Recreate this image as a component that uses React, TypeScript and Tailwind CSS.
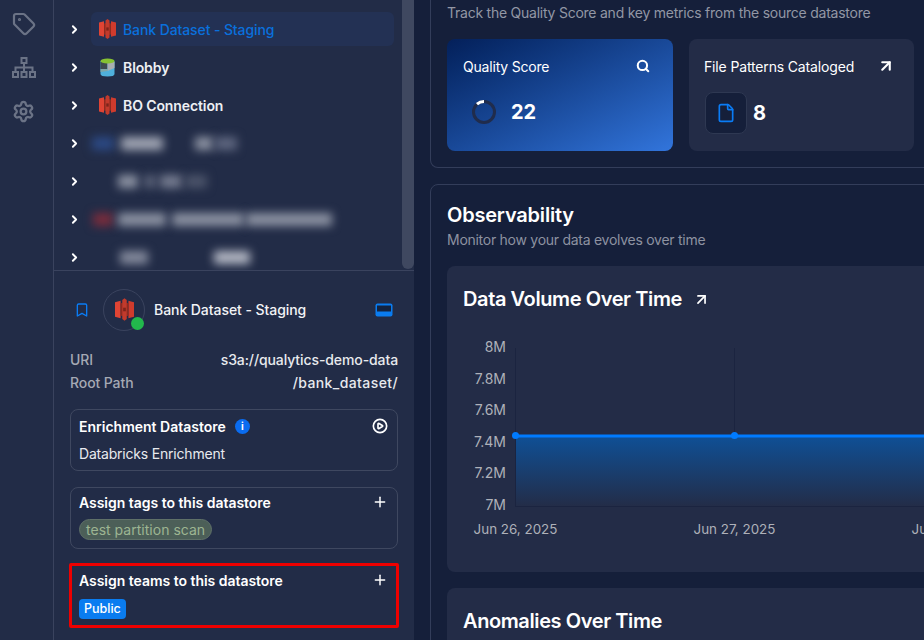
import { ArrowUpRight, Bookmark, ChevronRight, CirclePlay, File, Plus, Search, Settings, Tag } from "lucide-react";

// red bucket logo used for S3 datastores
function BucketIcon({ width = 17, height = 20 }: { width?: number; height?: number }) {
  return (
    <svg width={width} height={height} viewBox="0 0 17 20">
      <path d="M0 3.5 L5 2.2 V17.8 L0 16.5 Z" fill="#e04434" />
      <path d="M17 3.5 L12 2.2 V17.8 L17 16.5 Z" fill="#cf3b2d" />
      <path d="M5 4.5 L7 4 V16 L5 15.5 Z" fill="#8f2a1f" />
      <path d="M12 4.5 L10 4 V16 L12 15.5 Z" fill="#8f2a1f" />
      <path d="M6.5 1.5 L8.5 0 L10.5 1.5 V18.5 L8.5 20 L6.5 18.5 Z" fill="#c23a2c" />
      <rect x="7.3" y="8.4" width="2.4" height="3.2" fill="#7d241a" />
    </svg>
  );
}

function BlobbyIcon() {
  return (
    <svg width="15" height="19" viewBox="0 0 15 19">
      <path d="M0.5 3 H14.5 V16 Q14.5 18.5 7.5 18.5 Q0.5 18.5 0.5 16 Z" fill="#4fb0dc" />
      <rect x="0.5" y="4" width="7" height="7" fill="#3f4a50" />
      <path d="M7.5 4 H14.5 V10 L7.5 13 Z" fill="#a9adb0" />
      <path d="M0.5 11 H7.5 V13 L0.5 14 Z" fill="#7fa6a8" />
      <ellipse cx="7.5" cy="3" rx="7" ry="2.5" fill="#86c232" />
    </svg>
  );
}

function SitemapIcon() {
  return (
    <svg width="24" height="22" viewBox="0 0 24 22" fill="none" stroke="#6b7386" strokeWidth="2">
      <rect x="9.5" y="1" width="5" height="5" />
      <rect x="1" y="15" width="5" height="5" />
      <rect x="9.5" y="15" width="5" height="5" />
      <rect x="18" y="15" width="5" height="5" />
      <path d="M12 6 V15 M3.5 15 V10.5 H20.5 V15" />
    </svg>
  );
}

function PanelIcon() {
  return (
    <svg width="18" height="14" viewBox="0 0 18 14">
      <rect x="0.5" y="0.5" width="17" height="13" rx="2" fill="#0a7cf0" />
      <rect x="2" y="2.5" width="14" height="6" fill="#14233f" />
    </svg>
  );
}

function TreeRow({ label, icon, active }: { label: string; icon: React.ReactNode; active?: boolean }) {
  return (
    <div className="flex items-center h-[34px]">
      <ChevronRight size={13} strokeWidth={3.5} className="text-white ml-[14px] w-[13px] shrink-0" />
      <div className={`ml-[10px] flex items-center w-[303px] h-[34px] rounded-md pl-[6px] ${active ? "bg-[#233154]" : ""}`}>
        <div className="w-[20px] flex justify-center">{icon}</div>
        <span className={`ml-[6px] text-[14px] tracking-[-0.1px] ${active ? "text-[#0a70dc] font-medium" : "text-[#eef0f4] font-semibold"}`}>
          {label}
        </span>
      </div>
    </div>
  );
}

// redacted rows in the reference, just soft smudges
function BlurRow({ parts }: { parts: { w: number; ml: number; c: string }[] }) {
  return (
    <div className="flex items-center h-[34px]">
      <ChevronRight size={13} strokeWidth={3.5} className="text-white ml-[14px] w-[13px] shrink-0" />
      <div className="ml-[9px] flex items-center">
        {parts.map((p, i) => (
          <div key={i} className={`h-[13px] blur-[5px] ${p.c}`} style={{ width: p.w, marginLeft: p.ml }} />
        ))}
      </div>
    </div>
  );
}

function Chart() {
  const yLabels = [
    ["8M", 352],
    ["7.8M", 384],
    ["7.6M", 415],
    ["7.4M", 447],
    ["7.2M", 478],
    ["7M", 510],
  ] as const;
  const ox = 447;
  const oy = 266;
  return (
    <svg width="600" height="306" viewBox={`${ox} ${oy} 600 306`} className="block">
      <defs>
        <linearGradient id="area" x1="0" y1="0" x2="0" y2="1">
          <stop offset="0" stopColor="#0f5096" />
          <stop offset="1" stopColor="#232d48" />
        </linearGradient>
      </defs>
      <rect x="515" y="436" width="532" height="70" fill="url(#area)" />
      <path d="M515.5 348 V506 M734.5 348 V436 M515 506.5 H1047" stroke="#1b2440" strokeWidth="1" fill="none" />
      <path d="M515 436 H1047" stroke="#007bff" strokeWidth="3" />
      <circle cx="515.5" cy="435.5" r="3.5" fill="#007bff" />
      <circle cx="734.5" cy="435.5" r="3.5" fill="#007bff" />
      {yLabels.map(([t, y]) => (
        <text key={t} x="506" y={y} textAnchor="end" fontSize="14" fill="#aeb1b9" fontFamily="Inter, sans-serif">
          {t}
        </text>
      ))}
      {[
        ["Jun 26, 2025", 515.5],
        ["Jun 27, 2025", 734.5],
        ["Jun 28, 2025", 953.5],
      ].map(([t, x]) => (
        <text key={t} x={x} y="534" textAnchor="middle" fontSize="13.4" fill="#aeb1b9" fontFamily="Inter, sans-serif">
          {t}
        </text>
      ))}
    </svg>
  );
}

export default function App() {
  return (
    <div className="flex w-[924px] h-[640px] overflow-hidden bg-[#151f3a] font-['Inter',sans-serif] text-white">
      {/* icon rail */}
      <div className="w-[54px] shrink-0 bg-[#222c47] border-r border-[#3a435e] flex flex-col items-center pt-[12px] gap-[21px]">
        <Tag size={24} strokeWidth={2.2} className="text-[#6b7386] ml-[-6px]" />
        <div className="ml-[-6px]"><SitemapIcon /></div>
        <Settings size={23} strokeWidth={2.4} className="text-[#6b7386] ml-[-7px]" />
      </div>

      {/* datastore tree and detail */}
      <div className="w-[360px] shrink-0 bg-[#222c47] flex flex-col">
        <div className="h-[271px] shrink-0 relative border-b border-[#3a435e] overflow-hidden">
          <div className="flex flex-col gap-[4px] mt-[-26px]">
            <TreeRow label="" icon={<div className="w-[10px] h-[10px] mt-[-13px] bg-[#0a74e0]" />} />
            <TreeRow label="Bank Dataset - Staging" icon={<BucketIcon />} active />
            <TreeRow label="Blobby" icon={<BlobbyIcon />} />
            <TreeRow label="BO Connection" icon={<BucketIcon />} />
            <BlurRow parts={[{ w: 22, ml: 2, c: "bg-[#2c4a85]" }, { w: 42, ml: 7, c: "bg-[#a2a7b5]" }, { w: 18, ml: 32, c: "bg-[#8d93a3]" }, { w: 22, ml: 2, c: "bg-[#5f6780]" }]} />
            <BlurRow parts={[{ w: 20, ml: 28, c: "bg-[#8d93a3]" }, { w: 12, ml: 6, c: "bg-[#5a6278]" }, { w: 22, ml: 4, c: "bg-[#767c90]" }, { w: 22, ml: 3, c: "bg-[#4c546a]" }]} />
            <BlurRow parts={[{ w: 20, ml: 3, c: "bg-[#7a2c3c]" }, { w: 48, ml: 5, c: "bg-[#8d93a3]" }, { w: 72, ml: 6, c: "bg-[#8d93a3]" }, { w: 86, ml: 2, c: "bg-[#8d93a3]" }]} />
            <BlurRow parts={[{ w: 28, ml: 30, c: "bg-[#858b9d]" }, { w: 36, ml: 66, c: "bg-[#b4b8c4]" }]} />
          </div>
          <div className="absolute right-0 top-0 w-[12px] h-[269px] bg-[#3f4860] rounded-b-md" />
        </div>

        <div className="px-[16px]">
          <div className="flex items-center h-[76px] pt-[1px]">
            <Bookmark size={16} strokeWidth={2} className="text-[#0a7cf5] ml-[4px]" />
            <div className="relative ml-[13px] w-[42px] h-[42px] rounded-full border border-[#3a435e] flex items-center justify-center">
              <BucketIcon width={19} height={23} />
              <div className="absolute right-[0px] bottom-0 w-[13px] h-[13px] rounded-full bg-[#22b84c]" />
            </div>
            <span className="ml-[9px] text-[14px] font-medium tracking-[-0.06px] text-[#f2f3f6]">Bank Dataset - Staging</span>
            <div className="ml-auto mr-[5px] flex"><PanelIcon /></div>
          </div>

          <div className="mt-[3px] flex flex-col gap-[4px] text-[14px] leading-[19px] font-medium tracking-[-0.1px]">
            <div className="flex justify-between">
              <span className="text-[#a5a9b4]">URI</span>
              <span className="text-[#e8eaee]">s3a://qualytics-demo-data</span>
            </div>
            <div className="flex justify-between">
              <span className="text-[#a5a9b4]">Root Path</span>
              <span className="text-[#e8eaee] tracking-[0.4px]">/bank_dataset/</span>
            </div>
          </div>

          <div className="mt-[17px] flex flex-col gap-[16px]">
            <div className="h-[62px] rounded-lg border border-[#3f4860] px-[8px] pt-[7px]">
              <div className="flex items-center h-[18px]">
                <span className="text-[14px] font-semibold tracking-[0px]">Enrichment Datastore</span>
                <span className="ml-[9px] w-[15px] h-[15px] rounded-full bg-[#0a6cf0] text-[10px] font-bold flex items-center justify-center">i</span>
                <CirclePlay size={16} strokeWidth={2.5} className="ml-auto mr-[1px]" />
              </div>
              <div className="mt-[10px] text-[14px] leading-[18px] tracking-[-0.2px] text-[#e8eaee]">Databricks Enrichment</div>
            </div>

            <div className="h-[62px] rounded-lg border border-[#3f4860] px-[8px] pt-[5px]">
              <div className="flex items-center justify-between h-[18px]">
                <span className="text-[14px] font-semibold tracking-[-0.03px]">Assign tags to this datastore</span>
                <Plus size={16} strokeWidth={2.2} className="mr-[1px]" />
              </div>
              <div className="mt-[8px] inline-flex items-center h-[21px] px-[6px] rounded-full bg-[#4c5f58] border border-[#5f7068] text-[14px] tracking-[0.02px] text-[#9db592]">
                test partition scan
              </div>
            </div>

            <div className="h-[65px] mx-[-1px] mt-[-2px] border-[3px] border-[#ee0000] rounded-[2px] px-[7px] pt-[5px]">
              <div className="flex items-center justify-between h-[18px]">
                <span className="text-[14px] font-semibold tracking-[-0.03px]">Assign teams to this datastore</span>
                <Plus size={16} strokeWidth={2.2} className="mr-[1px]" />
              </div>
              <div className="mt-[10px] inline-flex items-center h-[20px] px-[5px] rounded bg-[#0a7cf0] text-[12.5px] font-medium">Public</div>
            </div>
          </div>
        </div>
      </div>

      {/* main content */}
      <div className="flex-1 min-w-0 pl-[16px] overflow-hidden">
        <div className="w-[640px] h-[168px] border border-t-0 border-[#333d5a] rounded-b-lg px-[16px]">
          <div className="pt-[4px] h-[39px] text-[14px] leading-[18px] tracking-[-0.24px] text-[#9297a5]">
            Track the Quality Score and key metrics from the source datastore
          </div>
          <div className="flex gap-[16px]">
            <div className="w-[226px] h-[112px] rounded-lg bg-gradient-to-br from-[#04205a] to-[#3275dc] px-[16px] pt-[17px]">
              <div className="flex items-center justify-between h-[20px]">
                <span className="text-[14px] tracking-[-0.2px]">Quality Score</span>
                <Search size={14} strokeWidth={3.5} className="mr-[7px]" />
              </div>
              <div className="flex items-center mt-[21px] ml-[9px]">
                <svg width="24" height="24" viewBox="0 0 24 24" fill="none" strokeWidth="3">
                  <circle cx="12" cy="12" r="10.5" stroke="#202c4c" />
                  <path d="M5 4.2 A10.5 10.5 0 0 1 12 1.5" stroke="#fff" />
                </svg>
                <span className="ml-[15px] text-[20px] font-bold">22</span>
              </div>
            </div>
            <div className="w-[225px] h-[112px] rounded-lg bg-[#232c47] px-[15px] pt-[17px]">
              <div className="flex items-center justify-between h-[20px]">
                <span className="text-[14px] tracking-[-0.15px]">File Patterns Cataloged</span>
                <ArrowUpRight size={18} strokeWidth={2.8} className="mr-[4px]" />
              </div>
              <div className="flex items-center mt-[16px] ml-[1px]">
                <div className="w-[42px] h-[42px] rounded-lg bg-[#151f3a] border border-[#2e3852] flex items-center justify-center">
                  <File size={20} strokeWidth={2} className="text-[#0a7cf5]" />
                </div>
                <span className="ml-[6px] text-[20px] font-bold">8</span>
              </div>
            </div>
          </div>
        </div>

        <div className="mt-[16px] w-[640px] h-[500px] border border-[#333d5a] rounded-lg px-[16px] pt-[17px]">
          <div className="text-[20px] leading-[26px] font-semibold tracking-[-0.2px]">Observability</div>
          <div className="mt-[3px] text-[14px] leading-[18px] tracking-[-0.27px] text-[#8d92a1]">Monitor how your data evolves over time</div>
          <div className="mt-[17px] h-[306px] rounded-lg bg-[#232c47] relative overflow-hidden">
            <div className="absolute left-[16px] top-[20px] flex items-center">
              <span className="text-[20px] leading-[26px] font-semibold tracking-[-0.4px]">Data Volume Over Time</span>
              <ArrowUpRight size={17} strokeWidth={2.4} className="ml-[11px]" />
            </div>
            <Chart />
          </div>
          <div className="mt-[16px] h-[200px] rounded-lg bg-[#232c47] px-[16px] pt-[20px]">
            <span className="text-[20px] leading-[26px] font-semibold tracking-[-0.4px]">Anomalies Over Time</span>
          </div>
        </div>
      </div>
    </div>
  );
}
